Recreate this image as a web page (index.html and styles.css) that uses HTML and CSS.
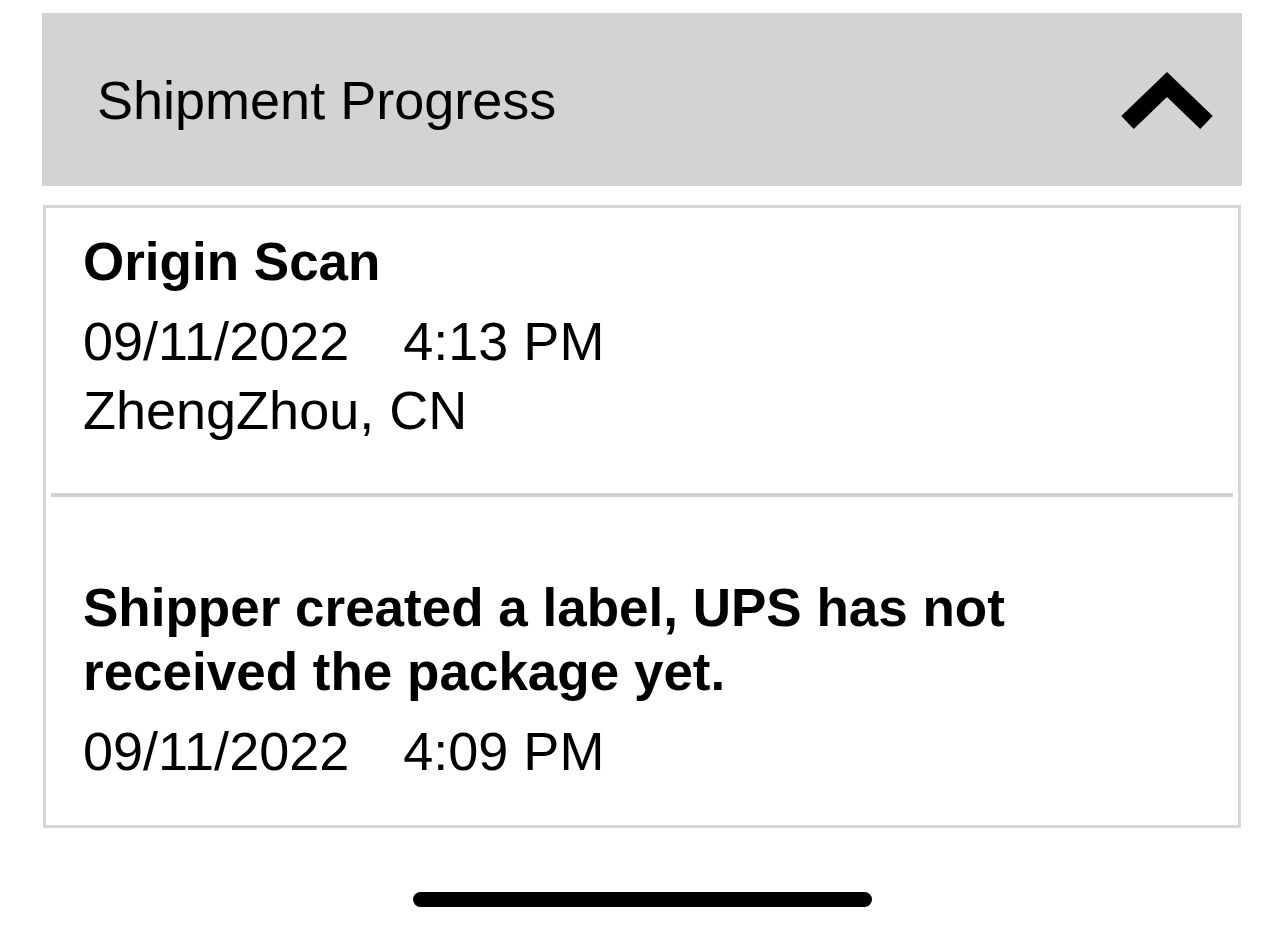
FILE: index.html
```html
<!DOCTYPE html>
<html lang="en">
<head>
<meta charset="utf-8">
<title>Shipment Progress</title>
<link rel="stylesheet" href="styles.css">
</head>
<body>
<div class="page">
  <div class="header">
    <div class="header-title">Shipment Progress</div>
    <svg class="chevron" width="96" height="64" viewBox="0 0 96 64" aria-hidden="true">
      <polyline points="9.5,54.5 49,16.5 88.5,54.5" fill="none" stroke="#000" stroke-width="18" stroke-linecap="butt" stroke-linejoin="miter"/>
    </svg>
  </div>
  <div class="card">
    <div class="item item-first">
      <div class="item-title">Origin Scan</div>
      <div class="item-line"><span>09/11/2022</span><span class="time">4:13 PM</span></div>
      <div class="item-line">ZhengZhou, CN</div>
    </div>
    <div class="divider"></div>
    <div class="item item-second">
      <div class="item-title">Shipper created a label, UPS has not received the package yet.</div>
      <div class="item-line"><span>09/11/2022</span><span class="time">4:09 PM</span></div>
    </div>
  </div>
  <div class="home-indicator"></div>
</div>
</body>
</html>
```
FILE: styles.css
```css
html, body {
  margin: 0;
  padding: 0;
  background: #ffffff;
}
body {
  font-family: "Liberation Sans", Arial, sans-serif;
  color: #000000;
}
.page {
  padding: 13px 0 0 42px;
  width: 1200px;
}
.header {
  height: 173px;
  background: #d3d3d3;
  display: flex;
  align-items: center;
  justify-content: space-between;
  padding: 0 28px 0 55px;
}
.header-title {
  font-size: 54px;
  line-height: 64px;
}
.chevron {
  display: block;
}
.card {
  margin: 19px 1px 0 1px;
  border: 3px solid #d6d6d6;
}
.item {
  padding-left: 37px;
  padding-right: 34px;
}
.item-first {
  padding-top: 22px;
  padding-bottom: 48px;
}
.item-second {
  padding-top: 79px;
  padding-bottom: 39px;
}
.item-title {
  font-weight: bold;
  font-size: 53px;
  line-height: 64px;
  margin-bottom: 13px;
}
.item-line {
  font-size: 54px;
  line-height: 69px;
  display: flex;
}
.time {
  margin-left: 54px;
}
.divider {
  height: 4px;
  margin: 0 5px;
  background: #d2d1cd;
}
.home-indicator {
  margin: 64px 0 0 371px;
  width: 459px;
  height: 15px;
  border-radius: 8px;
  background: #000000;
}
```
